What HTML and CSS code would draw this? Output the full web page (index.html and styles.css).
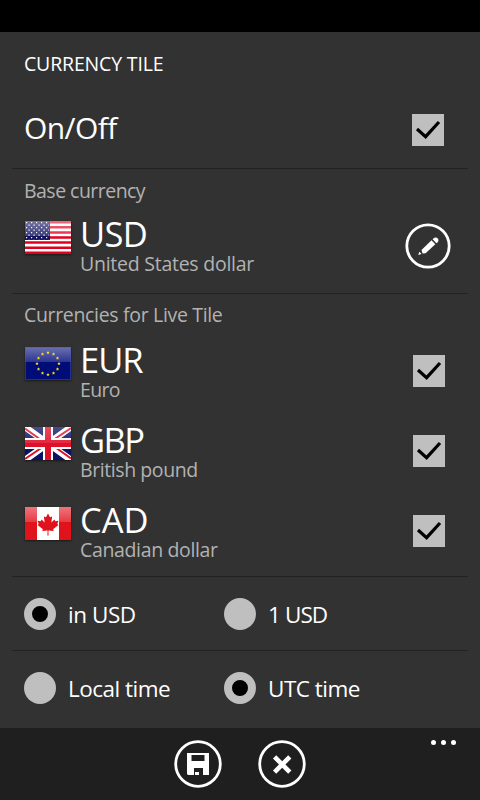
FILE: index.html
```html
<!DOCTYPE html>
<html lang="en">
<head>
<meta charset="utf-8">
<title>Currency tile</title>
<link rel="stylesheet" href="styles.css">
</head>
<body>
<svg class="defs" width="0" height="0" aria-hidden="true">
  <defs>
    <linearGradient id="gloss" x1="0" y1="0" x2="0" y2="1">
      <stop offset="0" stop-color="#fff" stop-opacity=".42"/>
      <stop offset="1" stop-color="#fff" stop-opacity=".17"/>
    </linearGradient>
    <path id="star" d="M0-1.700.5-.6 1.700-.5.8.3 1.100 1.500 0 .9-1.100 1.500-.8.3-1.700-.5-.5-.6Z"/>
    <pattern id="dots" width="5" height="5" patternUnits="userSpaceOnUse">
      <path d="M1 1h1.200v1.200H1ZM3.500 3.500h1.200v1.200h-1.200Z" fill="#fff"/>
    </pattern>
  </defs>
</svg>
<div class="status"></div>
<main>
  <section class="power">
    <h1 class="title">CURRENCY TILE</h1>
    <div class="row">
      <span class="onoff">On/Off</span>
      <span class="check"><svg viewBox="0 0 32 32"><path d="M5 15 13.600 22.700 27 8"/></svg></span>
    </div>
  </section>
  <section class="base">
    <h2 class="label lb1">Base currency</h2>
    <div class="row">
      <svg class="flag" viewBox="0 0 46 33">
        <path fill="#fff" d="M0 0h46v33H0z"/>
        <path stroke="#e2001f" stroke-width="2.540" d="M0 1.270h46M0 6.350h46M0 11.430h46M0 16.500h46M0 21.580h46M0 26.650h46M0 31.730h46"/>
        <path fill="#12125f" d="M0 0h25v19H0z"/>
        <path fill="url(#gloss)" d="M0 0h46v15H0z"/>
        <path fill="url(#dots)" d="M1 0h23v18.500H1z"/>
      </svg>
      <div class="names"><span class="code c-usd">USD</span><span class="sub s-usd">United States dollar</span></div>
      <svg class="edit" viewBox="0 0 46 46">
        <circle cx="23" cy="23" r="21.200" fill="none" stroke="#fff" stroke-width="2.800"/>
        <g fill="#fff">
          <path d="M26.500 17.300 30.300 21.200 20.600 30.200 17.600 30.600 16.500 27Z"/>
          <path d="M27.600 16.300c1.700-2.200 4-2.200 5.200-.9 1.300 1.400.8 3.600-1.400 4.900Z"/>
          <path d="M14.500 28.800 16.500 31 13.200 32Z"/>
        </g>
      </svg>
    </div>
  </section>
  <section class="live">
    <h2 class="label lb2">Currencies for Live Tile</h2>
    <div class="row">
      <svg class="flag" viewBox="0 0 46 33">
        <path fill="#000c78" d="M0 0h46v33H0z"/>
        <path fill="url(#gloss)" d="M0 0h46v15H0z"/>
        <g fill="#ffe01c">
          <use href="#star" x="23" y="5.500"/><use href="#star" x="28.500" y="7"/><use href="#star" x="32.500" y="11"/>
          <use href="#star" x="34" y="16.500"/><use href="#star" x="32.500" y="22"/><use href="#star" x="28.500" y="26"/>
          <use href="#star" x="23" y="27.500"/><use href="#star" x="17.500" y="26"/><use href="#star" x="13.500" y="22"/>
          <use href="#star" x="12" y="16.500"/><use href="#star" x="13.500" y="11"/><use href="#star" x="17.500" y="7"/>
        </g>
        <path fill="none" stroke="#4a55a8" stroke-opacity=".5" d="M.5.5h45v32H.5z"/>
      </svg>
      <div class="names"><span class="code c-eur">EUR</span><span class="sub s-eur">Euro</span></div>
      <span class="check"><svg viewBox="0 0 32 32"><path d="M5 15 13.600 22.700 27 8"/></svg></span>
    </div>
    <div class="row">
      <svg class="flag" viewBox="0 0 46 33">
        <path fill="#0c1264" d="M0 0h46v33H0z"/>
        <path stroke="#fff" stroke-width="6.500" d="M0 0 46 33M46 0 0 33"/>
        <path stroke="#df1029" stroke-width="2" d="M0 1.500 20 15.800M46 1 26 14.500M0 32 20 18.500M46 31.500 26 17.200"/>
        <path fill="#fff" d="M18 0h10v33H18zM0 11h46v11H0z"/>
        <path fill="#df1029" d="M20 0h6v33h-6zM0 13h46v7H0z"/>
        <path fill="url(#gloss)" d="M0 0h46v16H0z" opacity=".6"/>
      </svg>
      <div class="names"><span class="code c-gbp">GBP</span><span class="sub s-gbp">British pound</span></div>
      <span class="check"><svg viewBox="0 0 32 32"><path d="M5 15 13.600 22.700 27 8"/></svg></span>
    </div>
    <div class="row">
      <svg class="flag" viewBox="0 0 46 33">
        <path fill="#e0131c" d="M0 0h46v33H0z"/>
        <path fill="url(#gloss)" d="M0 0h46v15H0z"/>
        <path fill="#fff" d="M12 0h22v33H12z"/>
        <path fill="#e0131c" d="m23 6.500 2 3.800 2.200-.8-.9 6 3.200-3 .8 1.800 3.200-.5-1.200 3.200 1.200 1-5.400 4.300.6 1.700-5.300-.6.200 5.100h-1.200l.2-5.100-5.300.6.600-1.700-5.400-4.300 1.200-1-1.200-3.200 3.200.5.800-1.800 3.200 3-.9-6 2.200.8Z"/>
      </svg>
      <div class="names"><span class="code c-cad">CAD</span><span class="sub s-cad">Canadian dollar</span></div>
      <span class="check"><svg viewBox="0 0 32 32"><path d="M5 15 13.600 22.700 27 8"/></svg></span>
    </div>
  </section>
  <section class="options unit">
    <div class="option"><span class="radio on"></span><span class="otext o1">in USD</span></div>
    <div class="option"><span class="radio"></span><span class="otext o2">1 USD</span></div>
  </section>
  <section class="options zone">
    <div class="option"><span class="radio"></span><span class="otext o3">Local time</span></div>
    <div class="option"><span class="radio on"></span><span class="otext o4">UTC time</span></div>
  </section>
</main>
<footer class="appbar">
  <svg class="action" viewBox="0 0 48 48">
    <circle cx="24" cy="24" r="22.300" fill="none" stroke="#fff" stroke-width="2.800"/>
    <path fill="#fff" fill-rule="evenodd" d="M13 13h22v22h-6v-7h-9v7h-6l-1-1zM17.500 15v6h13v-6zM21 32h4v3h-4z"/>
  </svg>
  <svg class="action" viewBox="0 0 48 48">
    <circle cx="24" cy="24" r="22.300" fill="none" stroke="#fff" stroke-width="2.800"/>
    <path fill="none" stroke="#fff" stroke-width="4.600" d="M16.600 16.800 31.800 32.200M31.800 16.800 16.600 32.200"/>
  </svg>
  <div class="more"><i></i><i></i><i></i></div>
</footer>
</body>
</html>
```
FILE: styles.css
```css
* { box-sizing: border-box; }
body {
  margin: 0;
  width: 480px;
  height: 800px;
  overflow: hidden;
  background: #323232;
  color: #fff;
  font-family: "Open Sans", "Noto Sans", sans-serif;
  display: flex;
  flex-direction: column;
}
h1, h2 { margin: 0; font-weight: 400; }
svg { display: block; }
.defs { flex: none; }
.status { height: 32px; background: #000; }
main { padding: 0 12px; height: 696px; }
section { padding: 0 12px; border-bottom: 1px solid #222; white-space: nowrap; }
.power { height: 137px; padding-top: 18px; }
.base { height: 125px; padding-top: 8px; }
.live { height: 283px; padding-top: 7px; }
.title { font-size: 19.500px; line-height: 28px; letter-spacing: -.17px; }
.row { display: flex; align-items: flex-start; }
.power .row { margin-top: 30px; }
.onoff { font-size: 30px; line-height: 40px; letter-spacing: -.6px; }
.check {
  width: 32px;
  height: 32px;
  margin: 15px 11px 0 auto;
  background: #bfbfbf;
}
.power .check { margin: 6px 12px 0 auto; }
.check path { fill: none; stroke: #000; stroke-width: 3.200; }
.label { font-size: 19.500px; line-height: 28px; color: #b2b2b2; }
.lb1 { letter-spacing: -.53px; }
.lb2 { letter-spacing: -.33px; }
.base .row { height: 60px; margin-top: 9px; }
.live .row { height: 60px; margin-bottom: 20px; }
.live .label { margin-bottom: 11px; }
.flag {
  width: 46px;
  height: 33px;
  margin: 7px 9px 0 1px;
  box-shadow: 0 1px 2px rgba(0, 0, 0, .55);
}
.names { display: flex; flex-direction: column; }
.code { font-size: 34.500px; line-height: 40px; }
.sub { font-size: 19.500px; line-height: 19px; color: #b2b2b2; }
.c-usd { letter-spacing: -.6px; }
.c-eur { letter-spacing: -1px; }
.c-gbp { letter-spacing: -1.500px; }
.s-usd { letter-spacing: -.25px; }
.s-eur { letter-spacing: -.7px; }
.s-gbp { letter-spacing: -.42px; }
.s-cad { letter-spacing: -.35px; }
.edit { width: 46px; height: 46px; margin: 9px 5px 0 auto; }
.options { display: flex; }
.unit { height: 74px; padding-top: 21px; }
.zone { height: 77px; padding-top: 21px; border: 0; }
.option { display: flex; width: 200px; }
.radio {
  width: 32px;
  height: 32px;
  margin-right: 12px;
  border-radius: 50%;
  background: #bfbfbf;
}
.radio.on { background: #000; border: 8px solid #bfbfbf; }
.otext { font-size: 22.500px; line-height: 32px; padding-top: 1px; }
.o1 { letter-spacing: -.45px; }
.o2 { letter-spacing: -.9px; }
.o3 { letter-spacing: -.5px; }
.o4 { letter-spacing: -.5px; }
.appbar {
  height: 72px;
  background: #1f1f1f;
  display: flex;
  gap: 36px;
  padding: 12px 24px 0 174px;
}
.action { width: 48px; height: 48px; }
.more { display: flex; gap: 5px; margin-left: auto; }
.more i { width: 5px; height: 5px; border-radius: 50%; background: #fff; }
```
